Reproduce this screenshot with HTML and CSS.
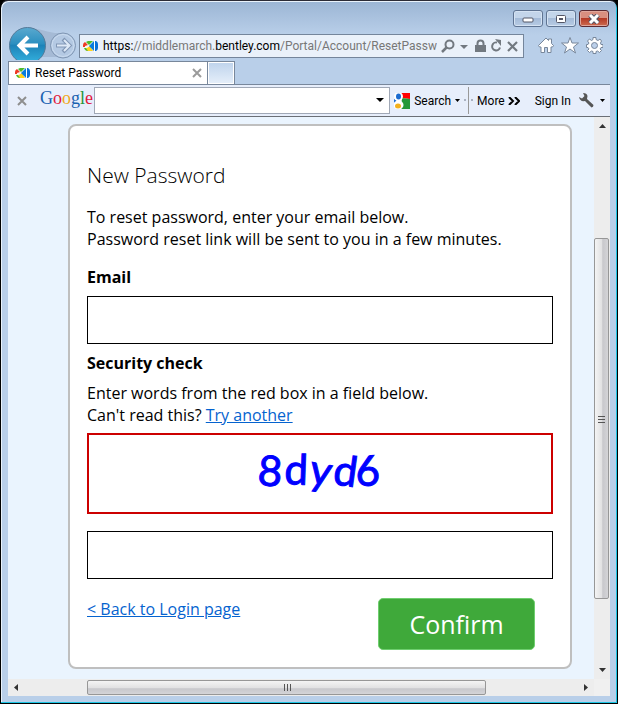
FILE: index.html
```html
<!DOCTYPE html>
<html lang="en">
<head>
    <meta charset="UTF-8">
    <meta name="viewport" content="width=device-width, initial-scale=1.0">
    <title>Reset Password</title>
    <link rel="stylesheet" href="styles.css">
</head>
<body>
    <svg class="defs" width="0" height="0" aria-hidden="true">
        <symbol id="bentley" viewBox="0 0 16 12">
            <path d="M1 4 8 1v10H4L1 8z" fill="#f6f6f0"/>
            <path d="M0 5q0-2 2-3l3 3-3 1v1H0z" fill="#ee3a22"/>
            <path d="M3 2l2-1h5L6 5z" fill="#4db92e"/>
            <path d="M4 8l3-2 3 5H5q-2 0-3-2z" fill="#ffd21c"/>
            <path d="M1 8h2l2 3q-3 0-4-3z" fill="#4db92e"/>
            <path d="M6 6 11 1v10z" fill="#087ddd"/>
            <path d="M11 0h1v12h-1z" fill="#fff"/>
            <path d="M12 1h1q2 1 2 3v4q0 2-2 3h-1z" fill="#0872d8"/>
        </symbol>
    </svg>
    <div class="window">
        <div class="titlebar">
            <button class="win-btn" aria-label="Minimize">
                <svg width="12" height="10"><rect x="1" y="4" width="10" height="4" rx="1" fill="#fff" stroke="#535666"/></svg>
            </button>
            <button class="win-btn" aria-label="Maximize">
                <svg width="12" height="10"><rect x="1.500" y="1.500" width="9" height="7" rx="1" fill="#fff" stroke="#535666"/><rect x="4.500" y="4.500" width="3" height="1" fill="#a9bfd9" stroke="#535666"/></svg>
            </button>
            <button class="win-btn win-close" aria-label="Close">
                <svg width="12" height="10"><path d="M2 1 10 9M10 1 2 9" stroke="#535666" stroke-width="5"/><path d="M2 1 10 9M10 1 2 9" stroke="#fff" stroke-width="3"/></svg>
            </button>
        </div>

        <div class="navbar">
            <div class="history">
                <svg width="72" height="35" viewBox="0 0 72 35">
                    <defs>
                        <linearGradient id="backFill" x1="0" y1="0" x2="0" y2="1">
                            <stop offset="0" stop-color="#5aa9cf"/>
                            <stop offset=".45" stop-color="#2b8fc0"/>
                            <stop offset=".5" stop-color="#1d83b8"/>
                            <stop offset="1" stop-color="#35b3e0"/>
                        </linearGradient>
                    </defs>
                    <path d="M20 2C34 2 42 8 55 7v24H20z" fill="#a5bad5"/>
                    <circle cx="20.500" cy="19.500" r="18" fill="url(#backFill)" stroke="#557a99"/>
                    <path d="M31 19.500H13M21 11l-8.500 8.500L21 28" fill="none" stroke="#fff" stroke-width="4"/>
                    <circle cx="56" cy="19.500" r="12.500" fill="#b4c9e3" stroke="#7f95b2"/>
                    <circle cx="56" cy="19.500" r="11" fill="none" stroke="#cbdcf0"/>
                    <path d="M49 19.500h12M56 13l6.500 6.500L56 26" fill="none" stroke="#8197b5" stroke-width="4"/>
                    <path d="M50 19.500h11M57 14l5.500 5.500L57 25" fill="none" stroke="#dfeaf7" stroke-width="2"/>
                </svg>
            </div>
            <div class="address">
                <svg class="favicon"><use href="#bentley"/></svg>
                <span class="url"><b>https:</b>//middlemarch.<b>bentley.com</b>/Portal/Account/ResetPassw</span>
                <svg class="address-icons" width="78" height="16" viewBox="0 0 78 16" fill="none" stroke="#727980">
                    <circle cx="8.500" cy="6.500" r="4" stroke-width="2"/><path d="M6 9 1 14" stroke-width="2.500"/>
                    <path d="M19 7h8l-4 4z" fill="#727980" stroke="none"/>
                    <rect x="34" y="7" width="11" height="7" fill="#727980" stroke="none"/><path d="M36.500 8V5.500a3 3 0 0 1 6 0V8" stroke-width="2"/>
                    <path d="M56 4.500a4 4 0 1 0 3 5" stroke-width="2"/><path d="M54 1l6 1v6z" fill="#727980" stroke="none"/>
                    <path d="M67 4l9 9M76 4l-9 9" stroke-width="2.200"/>
                </svg>
            </div>
            <svg class="tools" width="66" height="18" viewBox="0 0 66 18" fill="#fff" stroke="#78879b">
                <path d="M1.500 9.500 9 2l2.500 2.500V3h3v4.500l2 2-1 1.500h-1.500v5.500h-3.500v-5h-3v5H4V11H2.500z"/>
                <path d="M33 1.500l2 5.500h6.500l-5 4 2 6-5.500-4-5.500 4 2-6-5-4H31z"/>
                <path d="M56 1.500h3v2l2 1 2-1.500 1.500 2L63.500 7l.5 1.500h2v3h-2L63 13l1.500 1.500-2 2L60.500 15l-1.500.5v2h-3v-2l-1.500-.5-2 1.500-2-2L52 13l-1-1.500h-1.500v-3H51L52 7l-1.500-2 2-2L54.500 4.500 56 3.500z"/>
                <circle cx="57.500" cy="9.500" r="3" fill="#bcd0ea"/>
            </svg>
        </div>

        <div class="tabs">
            <div class="tab">
                <svg class="favicon"><use href="#bentley"/></svg>
                <span>Reset Password</span>
                <button class="x-btn" aria-label="Close tab"><svg width="10" height="10"><path d="M1 1 9 9M9 1 1 9" stroke="#9b9b9b" stroke-width="2"/></svg></button>
            </div>
            <button class="new-tab" aria-label="New tab"></button>
        </div>

        <div class="toolbar">
            <button class="x-btn" aria-label="Close toolbar"><svg width="10" height="10"><path d="M1 1 9 9M9 1 1 9" stroke="#8e8e8e" stroke-width="2"/></svg></button>
            <span class="google"><i class="blue">G</i><i class="red">o</i><i class="yellow">o</i><i class="blue">g</i><i class="green">l</i><i class="red">e</i></span>
            <div class="search-box">
                <input type="text" aria-label="Google search">
                <svg width="8" height="5"><path d="M0 0h8L4 4z"/></svg>
            </div>
            <button class="tool search-tool">
                <svg width="16" height="16" viewBox="0 0 16 16">
                    <path d="M6 0h10v6L8 5z" fill="#f00"/>
                    <path d="M8 5l8 1v10H7z" fill="#23983a"/>
                    <path d="M0 6l3 2-3 3z" fill="#1b6bd0"/>
                    <ellipse cx="4.500" cy="3.500" rx="4.500" ry="4.500" fill="#fff"/>
                    <ellipse cx="4.500" cy="12" rx="5" ry="4.500" fill="#fff"/>
                    <ellipse cx="4.500" cy="3.500" rx="2.500" ry="3" fill="#1b6bd0"/>
                    <ellipse cx="4" cy="13" rx="3" ry="2.500" fill="#f3b01b"/>
                </svg>
                Search
                <svg width="5" height="3"><path d="M0 0h5L2.500 3z"/></svg>
            </button>
            <svg class="divider" width="9" height="27"><path d="M4.500 0v27" stroke="#999"/><path d="M0 13h2M7 13h2" stroke="#aab2c2" stroke-width="2"/></svg>
            <button class="tool">More <svg width="12" height="8" fill="none" stroke="#000" stroke-width="2"><path d="M1 0l4 4-4 4M7 0l4 4-4 4"/></svg></button>
            <button class="tool sign-in">Sign In</button>
            <button class="tool wrench" aria-label="Settings">
                <svg width="15" height="15" viewBox="0 0 15 15"><path d="M4 0Q8 0 8.500 3L8 6l6.500 6q0 2-2 2.500L6 8Q1 9 0 4l3 1.500L5.500 3z" fill="#555"/></svg>
                <svg width="5" height="3"><path d="M0 0h5L2.500 3z"/></svg>
            </button>
        </div>

        <div class="view">
            <main class="page">
                <form class="card">
                    <h1>New Password</h1>
                    <p>To reset password, enter your email below.<br>Password reset link will be sent to you in a few minutes.</p>
                    <label for="email">Email</label>
                    <input type="text" id="email">
                    <label for="captcha">Security check</label>
                    <p class="hint">Enter words from the red box in a field below.<br>Can't read this? <a href="#">Try another</a></p>
                    <div class="captcha">
                        <svg width="130" height="54" viewBox="0 0 130 54">
                            <text x="2 29 53 77 101" y="35 34 33 34 36" rotate="4 2 10 8 -2">8dyd6</text>
                        </svg>
                    </div>
                    <input type="text" id="captcha">
                    <div class="actions">
                        <a href="#">&lt; Back to Login page</a>
                        <button type="submit" class="confirm">Confirm</button>
                    </div>
                </form>
            </main>
            <div class="vscroll">
                <svg width="7" height="4"><path d="M0 4h7L3.500 0z" fill="#333"/></svg>
                <div class="vtrack">
                    <div class="vthumb"><svg width="7" height="8"><path d="M0 1.500h7M0 4.500h7M0 7.500h7" stroke="#555"/></svg></div>
                </div>
                <svg width="7" height="4"><path d="M0 0h7L3.500 4z" fill="#333"/></svg>
            </div>
            <div class="hscroll">
                <svg width="4" height="7"><path d="M4 0v7L0 3.500z" fill="#333"/></svg>
                <div class="htrack">
                    <div class="hthumb"><svg width="8" height="7"><path d="M1.500 0v7M4.500 0v7M7.500 0v7" stroke="#555"/></svg></div>
                </div>
                <svg width="4" height="7"><path d="M0 0v7l4-3.500z" fill="#333"/></svg>
            </div>
            <div class="corner"></div>
        </div>
    </div>
</body>
</html>
```
FILE: styles.css
```css
* {
    box-sizing: border-box;
}

body {
    font-family: Roboto, "Open Sans", sans-serif;
    font-size: 12px;
    background-color: #000;
    margin: 0;
    color: #000;
}

svg {
    flex: none;
}

.defs {
    position: absolute;
}

button {
    font-family: inherit;
    font-size: inherit;
    color: inherit;
    background: none;
    border: none;
    padding: 0;
}

input {
    font-family: inherit;
    min-width: 0;
}

.window {
    display: flex;
    flex-direction: column;
    min-height: 100vh;
    padding: 0 6px 7px;
    border: 1px solid #000;
    border-top-color: #2b2b36;
    border-radius: 8px 8px 0 0;
    box-shadow: inset -1px -1px #1cc5e4, inset 1px 1px #e9f2fb;
    background: linear-gradient(#9bb5d4, #b9cfe9 34px);
}

.titlebar {
    display: flex;
    justify-content: flex-end;
    gap: 3px;
    height: 25px;
    padding: 9px 2px 0 0;
}

.win-btn {
    display: flex;
    align-items: center;
    justify-content: center;
    width: 30px;
    height: 17px;
    border: 1px solid #5f7492;
    border-radius: 3px;
    box-shadow: inset 0 0 0 1px #d5e3f3;
    background: linear-gradient(#c3d5ea 50%, #a4bbd8 50%, #b8cce4);
}

.win-close {
    border-color: #5b2931;
    box-shadow: inset 0 0 0 1px #e0a79c;
    background: linear-gradient(#d98f80 50%, #b53a26 50%, #cc6b50);
}

.navbar {
    display: flex;
    height: 34px;
}

.history {
    width: 72px;
}

.address {
    flex: 1;
    display: flex;
    align-items: center;
    min-width: 0;
    height: 24px;
    margin-top: 8px;
    padding: 0 4px 0 3px;
    border: 1px solid #74859b;
    background-color: #eaf1fa;
}

.favicon {
    width: 16px;
    height: 12px;
}

.url {
    flex: 1;
    overflow: hidden;
    margin: 0 4px;
    white-space: nowrap;
    color: #777;
}

.url b {
    font-weight: normal;
    color: #000;
}

.tools {
    margin: 10px 8px 0 13px;
}

.tabs {
    display: flex;
    height: 25px;
    margin: 0 1px;
    padding-top: 1px;
    border-bottom: 1px solid #78879b;
    position: relative;
    background-color: #b9cfe9;
}

.tab {
    display: flex;
    align-items: center;
    width: 200px;
    padding: 0 5px 0 6px;
    border: 1px solid #78879b;
    border-bottom: none;
    background-color: #fff;
}

.tab span {
    flex: 1;
    margin-left: 4px;
}

.x-btn {
    display: flex;
}

.new-tab {
    width: 27px;
    border: 1px solid #78879b;
    border-left: none;
    border-bottom: none;
    box-shadow: inset 0 0 0 1px #fff;
    background: linear-gradient(#bed3ec, #e6effa);
}

.toolbar {
    display: flex;
    align-items: center;
    height: 32px;
    margin: 0 1px;
    padding: 0 5px 0 9px;
    border-bottom: 1px solid #6b6f76;
    background-color: #e7eefb;
}

.google {
    width: 49px;
    margin: 0 5px 4px 13px;
    font-family: "Liberation Serif", serif;
    font-size: 18px;
}

.google i {
    font-style: normal;
}

.blue { color: #1a62b0; }
.red { color: #e0193f; }
.yellow { color: #f0a81c; }
.green { color: #27963c; }

.search-box {
    flex: 1;
    display: flex;
    align-items: center;
    height: 27px;
    padding-right: 5px;
    border: 1px solid #a0a8b6;
    background-color: #fff;
}

.search-box input {
    flex: 1;
    border: none;
    background: none;
}

.tool {
    display: flex;
    align-items: center;
    gap: 3px;
}

.search-tool {
    gap: 4px;
    margin-left: 4px;
}

.divider {
    margin: 0 4px;
}

.sign-in {
    margin-left: 15px;
}

.wrench {
    gap: 6px;
    margin-left: 8px;
}

.view {
    flex: 1;
    display: grid;
    grid-template-columns: 1fr 16px;
    grid-template-rows: 1fr 17px;
    margin: 0 1px;
    background-color: #eaf4fe;
}

.page {
    padding: 7px 22px 10px 60px;
    font-family: "Open Sans", "Noto Sans", sans-serif;
}

.card {
    padding: 34px 17px 17px;
    border: 2px solid #bfbfbf;
    border-radius: 8px;
    background-color: #fff;
    font-size: 16px;
    line-height: 22px;
}

.card h1 {
    margin: 0 0 16px;
    font-size: 21px;
    font-weight: 300;
    line-height: 30px;
}

.card p {
    margin: 0 0 16px;
}

.card .hint {
    margin-bottom: 7px;
}

.card label {
    display: block;
    margin-bottom: 8px;
    font-weight: bold;
}

.card input {
    display: block;
    width: 100%;
    height: 48px;
    margin-bottom: 8px;
    padding: 0 12px;
    border: 1px solid #000;
    border-radius: 0;
    font-size: 16px;
}

.card a {
    color: #0563cf;
}

.captcha {
    display: flex;
    justify-content: center;
    height: 81px;
    margin-bottom: 17px;
    padding-top: 15px;
    border: 2px solid #c00;
}

.captcha svg {
    overflow: visible;
}

.captcha text {
    font-family: Lato, sans-serif;
    font-size: 42px;
    fill: #00f;
    stroke: #00f;
    stroke-width: 1px;
}

.actions {
    display: flex;
    justify-content: space-between;
    align-items: flex-start;
    padding: 11px 18px 0 0;
}

.confirm {
    width: 157px;
    height: 52px;
    border: 1px solid #6fce6f;
    border-radius: 5px;
    background-color: #3fa93a;
    font-size: 25px;
    color: #fff;
}

.vscroll {
    display: flex;
    flex-direction: column;
    align-items: center;
    padding: 7px 0;
    background-color: #ededed;
}

.vtrack {
    flex: 1;
    display: flex;
    width: 100%;
    padding: 110px 1px 69px 0;
}

.vthumb {
    flex: 1;
    display: flex;
    align-items: center;
    justify-content: center;
    border: 1px solid #979797;
    border-radius: 2px;
    background: linear-gradient(to right, #f4f4f4, #e2e2e3 50%, #c8c8cc 60%, #d4d4d7);
}

.hscroll {
    display: flex;
    align-items: center;
    padding: 0 6px;
    background-color: #ededed;
}

.htrack {
    flex: 1;
    display: flex;
    height: 100%;
    padding: 1px 98px 1px 69px;
}

.hthumb {
    flex: 1;
    display: flex;
    align-items: center;
    justify-content: center;
    border: 1px solid #979797;
    border-radius: 2px;
    background: linear-gradient(#f4f4f4, #e2e2e3 50%, #c8c8cc 60%, #d4d4d7);
}

.corner {
    background-color: #f0f0f0;
}
```
